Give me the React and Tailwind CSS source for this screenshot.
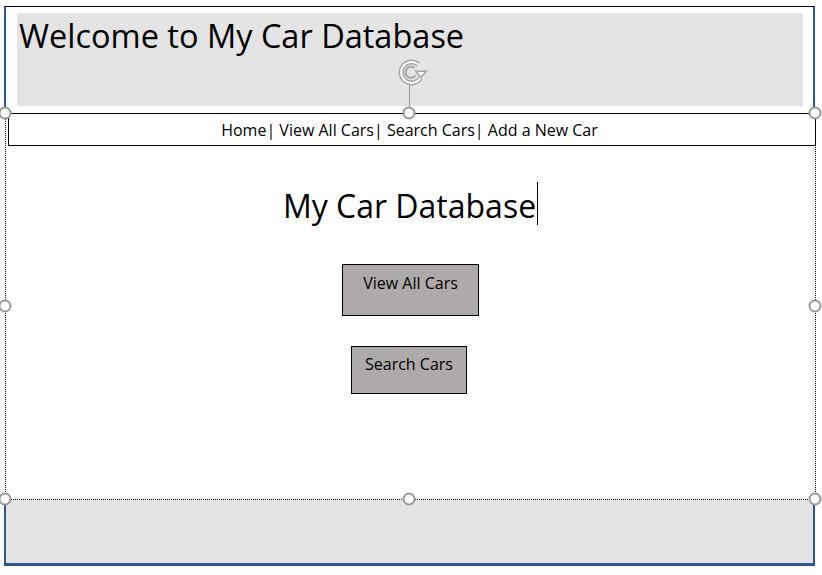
function Handle({ className }) {
  return (
    <span
      className={
        "absolute w-[13px] h-[13px] rounded-full border-2 border-[#9a9a9a] bg-white -translate-x-1/2 -translate-y-1/2 " +
        className
      }
    />
  );
}

function RotateIcon() {
  return (
    <svg width="36" height="30" viewBox="0 0 36 30">
      <path d="M21.5 6.5 A10.5 10.5 0 1 0 23.5 20" fill="none" stroke="#a6a6a6" strokeWidth="5" />
      <path d="M21.5 6.5 A10.5 10.5 0 1 0 23.5 20" fill="none" stroke="#ffffff" strokeWidth="2" />
      <path d="M17.5 10 A5.5 5.5 0 1 0 18.5 17.5" fill="none" stroke="#a6a6a6" strokeWidth="2" />
      <path d="M17 12.5 L31 12.5 L24 20.5 Z" fill="#a6a6a6" />
      <path d="M20.5 14 L27.5 14 L24 18 Z" fill="#ffffff" />
    </svg>
  );
}

export default function App() {
  return (
    <div className="relative w-[822px] h-[575px] bg-white text-black overflow-hidden font-['Open_Sans','Liberation_Sans',sans-serif]">
      <div className="pt-[6px] pl-[4px] w-[816px]">
        {/* Header */}
        <div className="w-[811px] h-[107px] border-t border-black border-l-2 border-l-[#2f5597] border-r-2 border-r-[#2f5597] pt-[6px] pl-[11px]">
          <div className="w-[786px] h-[93px] bg-[#e4e4e4] pl-[2px] pt-[3px]">
            <h1 className="text-[32.5px] leading-[40px]">Welcome to My Car Database</h1>
          </div>
        </div>

        {/* Body (selected placeholder) */}
        <div className="ml-[1px] w-[811px] h-[387px] border-x border-b border-dotted border-black">
          <div className="ml-[2px] w-[808px] h-[33px] border border-solid border-black flex items-center justify-center">
            <p className="text-[16px] leading-none pt-[1px] pr-[5px]">
              Home| View All Cars| Search Cars| Add a New Car
            </p>
          </div>

          <div className="flex flex-col items-center">
            <div className="mt-[36px] flex items-start">
              <h2 className="text-[32px] leading-[46px] pt-[1px]">My Car Database</h2>
              <span className="w-px h-[43px] bg-black ml-[1px]" />
            </div>

            <button className="mt-[35px] w-[137px] h-[52px] bg-[#aeaaaa] border border-solid border-black text-[16px] leading-none pt-[10px] flex justify-center items-start">
              View All Cars
            </button>

            <button className="mt-[30px] mr-[3px] w-[116px] h-[48px] bg-[#aeaaaa] border border-solid border-black text-[16px] leading-none pt-[9px] flex justify-center items-start">
              Search Cars
            </button>
          </div>
        </div>

        {/* Footer */}
        <div className="w-[811px] h-[66px] bg-[#e4e4e4] border-l-2 border-r-2 border-b-[3px] border-[#2f5597]" />
      </div>

      {/* selection overlays */}
      <span className="absolute left-[409px] top-[83px] w-px h-[30px] bg-[#9a9a9a]" />
      <div className="absolute left-[397px] top-[58px]">
        <RotateIcon />
      </div>
      <Handle className="left-[5px] top-[113px]" />
      <Handle className="left-[409px] top-[113px]" />
      <Handle className="left-[815px] top-[113px]" />
      <Handle className="left-[5px] top-[306px]" />
      <Handle className="left-[815px] top-[306px]" />
      <Handle className="left-[5px] top-[499px]" />
      <Handle className="left-[409px] top-[499px]" />
      <Handle className="left-[815px] top-[499px]" />
    </div>
  );
}
